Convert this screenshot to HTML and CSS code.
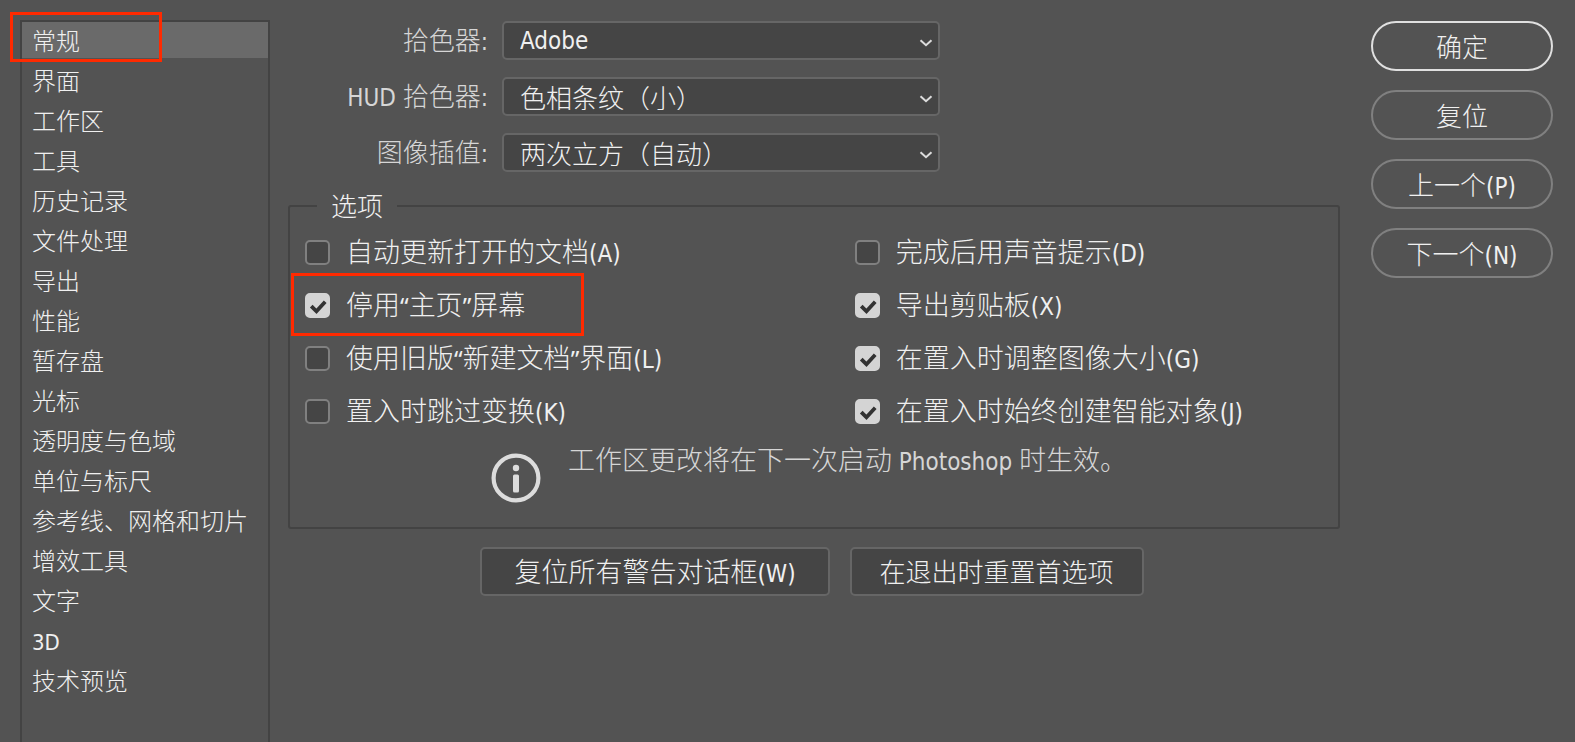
FILE: index.html
```html
<!DOCTYPE html>
<html lang="zh-CN">
<head>
<meta charset="utf-8">
<meta name="viewport" content="width=device-width, initial-scale=1">
<title>首选项</title>
<link rel="stylesheet" href="styles.css">
</head>
<body>
<div class="dialog">
  <nav class="sidebar">
    <a class="nav-item selected" href="#general" aria-current="page">常规<span class="marker marker-nav"></span></a>
    <a class="nav-item" href="#interface">界面</a>
    <a class="nav-item" href="#workspace">工作区</a>
    <a class="nav-item" href="#tools">工具</a>
    <a class="nav-item" href="#history">历史记录</a>
    <a class="nav-item" href="#files">文件处理</a>
    <a class="nav-item" href="#export">导出</a>
    <a class="nav-item" href="#performance">性能</a>
    <a class="nav-item" href="#scratch">暂存盘</a>
    <a class="nav-item" href="#cursors">光标</a>
    <a class="nav-item" href="#gamut">透明度与色域</a>
    <a class="nav-item" href="#units">单位与标尺</a>
    <a class="nav-item" href="#guides">参考线、网格和切片</a>
    <a class="nav-item" href="#plugins">增效工具</a>
    <a class="nav-item" href="#type">文字</a>
    <a class="nav-item" href="#3d"><span class="latin-small">3D</span></a>
    <a class="nav-item" href="#previews">技术预览</a>
  </nav>

  <main class="content">
    <div class="pickers">
      <label class="picker-label" for="picker">拾色器<span class="latin">:</span></label>
      <div class="select-wrap">
        <select class="select select-latin" id="picker"><option>Adobe</option></select>
        <svg class="chevron" viewBox="0 0 14 8" aria-hidden="true"><path d="M1.5 1.2 L7 6.2 L12.5 1.2"/></svg>
      </div>
      <label class="picker-label" for="hud"><span class="latin">HUD </span>拾色器<span class="latin">:</span></label>
      <div class="select-wrap">
        <select class="select" id="hud"><option>色相条纹（小）</option></select>
        <svg class="chevron" viewBox="0 0 14 8" aria-hidden="true"><path d="M1.5 1.2 L7 6.2 L12.5 1.2"/></svg>
      </div>
      <label class="picker-label" for="interp">图像插值<span class="latin">:</span></label>
      <div class="select-wrap">
        <select class="select" id="interp"><option>两次立方（自动）</option></select>
        <svg class="chevron" viewBox="0 0 14 8" aria-hidden="true"><path d="M1.5 1.2 L7 6.2 L12.5 1.2"/></svg>
      </div>
    </div>

    <fieldset class="options">
      <legend class="legend">选项</legend>
      <div class="checks">
        <div class="check"><input class="box" type="checkbox" id="c1"><label class="check-label" for="c1">自动更新打开的文档<span class="latin">(A)</span></label></div>
        <div class="check"><input class="box" type="checkbox" id="c2"><label class="check-label" for="c2">完成后用声音提示<span class="latin">(D)</span></label></div>
        <div class="check"><span class="tickbox"><input class="box" type="checkbox" id="c3" checked><svg class="tick" viewBox="0 0 24 24" aria-hidden="true"><path d="M6 12.6 L11 17.6 L19.4 8.4"/></svg></span><label class="check-label" for="c3">停用<span class="quote">“</span>主页<span class="quote">”</span>屏幕</label><span class="marker marker-check"></span></div>
        <div class="check"><span class="tickbox"><input class="box" type="checkbox" id="c4" checked><svg class="tick" viewBox="0 0 24 24" aria-hidden="true"><path d="M6 12.6 L11 17.6 L19.4 8.4"/></svg></span><label class="check-label" for="c4">导出剪贴板<span class="latin">(X)</span></label></div>
        <div class="check"><input class="box" type="checkbox" id="c5"><label class="check-label" for="c5">使用旧版<span class="quote">“</span>新建文档<span class="quote">”</span>界面<span class="latin">(L)</span></label></div>
        <div class="check"><span class="tickbox"><input class="box" type="checkbox" id="c6" checked><svg class="tick" viewBox="0 0 24 24" aria-hidden="true"><path d="M6 12.6 L11 17.6 L19.4 8.4"/></svg></span><label class="check-label" for="c6">在置入时调整图像大小<span class="latin">(G)</span></label></div>
        <div class="check"><input class="box" type="checkbox" id="c7"><label class="check-label" for="c7">置入时跳过变换<span class="latin">(K)</span></label></div>
        <div class="check"><span class="tickbox"><input class="box" type="checkbox" id="c8" checked><svg class="tick" viewBox="0 0 24 24" aria-hidden="true"><path d="M6 12.6 L11 17.6 L19.4 8.4"/></svg></span><label class="check-label" for="c8">在置入时始终创建智能对象<span class="latin">(J)</span></label></div>
      </div>
      <div class="notice">
        <svg class="info" viewBox="0 0 50 50" aria-hidden="true"><circle class="ring" cx="25" cy="25" r="22.4"/><circle cx="25" cy="15" r="3.2"/><rect x="22" y="21.5" width="6" height="18" rx="1.5"/></svg>
        <p class="notice-text">工作区更改将在下一次启动<span class="latin"> Photoshop </span>时生效。</p>
      </div>
    </fieldset>

    <div class="resets">
      <button class="reset reset-wide" type="button">复位所有警告对话框<span class="latin">(W)</span></button>
      <button class="reset" type="button">在退出时重置首选项</button>
    </div>
  </main>

  <div class="actions">
    <button class="pill primary" type="button">确定</button>
    <button class="pill" type="button">复位</button>
    <button class="pill" type="button">上一个<span class="latin">(P)</span></button>
    <button class="pill" type="button">下一个<span class="latin">(N)</span></button>
  </div>
</div>
</body>
</html>
```
FILE: styles.css
```css
* {
  box-sizing: border-box;
}

body {
  margin: 0;
  background: #535353;
  color: #f0f0f0;
  font-family: "Noto Sans CJK SC", sans-serif;
  font-size: 26px;
  font-weight: 300;
  line-height: 36px;
}

button,
select {
  font: inherit;
  color: inherit;
}

.latin,
.latin-small {
  font-family: "DejaVu Sans Condensed", "Noto Sans", sans-serif;
  font-size: 24px;
  font-weight: 400;
  line-height: 1;
}

.latin-small {
  font-size: 22px;
}

.quote {
  font-family: "Noto Sans", sans-serif;
  font-size: 24px;
  font-weight: 400;
  line-height: 1;
}

.dialog {
  display: grid;
  grid-template-columns: 250px minmax(0, 1fr) 182px;
  min-height: 100vh;
  padding: 20px 22px 0 20px;
}

.sidebar {
  display: flex;
  flex-direction: column;
  gap: 4px;
  border: 2px solid #434343;
  border-bottom: 0;
}

.nav-item {
  position: relative;
  height: 36px;
  padding-left: 10px;
  color: inherit;
  font-size: 24px;
  text-decoration: none;
  white-space: nowrap;
}

.selected {
  background: #6a6a6a;
}

.marker {
  position: absolute;
  border: 3px solid #ff2a00;
  pointer-events: none;
}

.marker-nav {
  top: -10px;
  left: -12px;
  width: 152px;
  height: 50px;
}

.marker-check {
  top: -14px;
  left: -14px;
  width: 293px;
  height: 63px;
}

.content {
  padding: 1px 31px 24px 18px;
}

.pickers {
  display: grid;
  grid-template-columns: 200px minmax(0, 438px);
  column-gap: 14px;
  row-gap: 17px;
  align-items: center;
}

.picker-label {
  height: 39px;
  color: #d6d6d6;
  text-align: right;
}

.select-wrap {
  position: relative;
}

.select {
  display: block;
  width: 100%;
  height: 39px;
  padding: 0 36px 4px 16px;
  border: 2px solid #666;
  border-radius: 5px;
  background: #454545;
  appearance: none;
}

.select-latin {
  padding-bottom: 0;
  font-family: "DejaVu Sans Condensed", "Noto Sans", sans-serif;
  font-size: 24px;
  font-weight: 400;
}

.chevron {
  position: absolute;
  top: 18px;
  right: 7px;
  width: 14px;
  height: 8px;
  fill: none;
  stroke: #dcdcdc;
  stroke-width: 2;
  pointer-events: none;
}

.options {
  min-width: 0;
  margin: 16px 0 0;
  padding: 10px 15px 24px;
  border: 2px solid #434343;
  border-radius: 3px;
}

.legend {
  height: 36px;
  margin-left: 12px;
  padding: 0 14px;
  line-height: 34px;
}

.checks {
  display: grid;
  grid-template-columns: 54fr 46fr;
  row-gap: 17px;
}

.check {
  position: relative;
  display: flex;
  align-items: center;
  gap: 16px;
  height: 36px;
  font-size: 27px;
  white-space: nowrap;
}

.check-label {
  padding-bottom: 2px;
}

.box {
  display: block;
  width: 25px;
  height: 25px;
  margin: 0;
  border: 2px solid #808080;
  border-radius: 5px;
  background: #454545;
  appearance: none;
}

.box:checked {
  border-color: #d4d4d4;
  background: #d4d4d4;
}

.tickbox {
  position: relative;
}

.tick {
  position: absolute;
  inset: 0;
  fill: none;
  stroke: #323232;
  stroke-width: 3.6;
  pointer-events: none;
}

.notice {
  display: flex;
  justify-content: center;
  gap: 27px;
  margin-top: 12px;
  padding-right: 10px;
  color: #d6d6d6;
}

.info {
  flex: none;
  width: 50px;
  height: 50px;
  margin-top: 12px;
  fill: #dcdcdc;
}

.ring {
  fill: none;
  stroke: #dcdcdc;
  stroke-width: 4.2;
}

.notice-text {
  margin: 0;
  font-size: 27px;
}

.resets {
  display: flex;
  justify-content: center;
  gap: 20px;
  margin-top: 18px;
  padding-right: 4px;
}

.reset {
  height: 49px;
  padding: 0 28px 2px;
  border: 2px solid #666;
  border-radius: 5px;
  background: #454545;
}

.reset-wide {
  padding: 0 32px 2px;
  font-size: 27px;
}

.actions {
  display: flex;
  flex-direction: column;
  gap: 19px;
  padding-top: 1px;
}

.pill {
  height: 50px;
  padding: 0;
  border: 2px solid #808080;
  border-radius: 25px;
  background: transparent;
}

.primary {
  border-color: #e0e0e0;
}
```
